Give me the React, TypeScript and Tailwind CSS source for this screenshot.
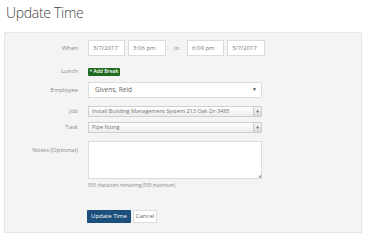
const labelCls = "w-[73px] shrink-0 text-right text-[6px] text-[#8a8a8a]";
const inputCls = "h-[16px] border border-[#dcdcdc] bg-white px-[4px] text-[6px] text-[#777] flex items-center";

function Select({ value, big }: { value: string; big?: boolean }) {
  if (big) {
    return (
      <div className="flex h-[16px] w-[174px] items-center justify-between border border-[#dcdcdc] bg-white pl-[6px] pr-[4px] text-[6.5px] text-[#666]">
        <span>{value}</span>
        <span className="text-[5px] text-[#555]">▼</span>
      </div>
    );
  }
  return (
    <div className="flex h-[11px] w-[174px] items-stretch border border-[#cfcfcf] bg-gradient-to-b from-white to-[#ececec] text-[5.5px] text-[#777]">
      <span className="flex flex-1 items-center pl-[3px]">{value}</span>
      <span className="flex w-[8px] items-center justify-center border-l border-[#cfcfcf] bg-gradient-to-b from-[#f4f4f4] to-[#d8d8d8] text-[4px] text-[#555]">▼</span>
    </div>
  );
}

export default function App() {
  return (
    <div className="h-[240px] w-[370px] bg-white font-['Open_Sans',sans-serif]">
      <h1 className="pl-[6px] pt-[2px] text-[14px] font-light leading-[22px] tracking-[-0.3px] text-[#444]">Update Time</h1>

      <div className="ml-[4px] mt-[8px] h-[201px] w-[358px] border border-[#e6e6e6] bg-[#f4f4f4]">
        {/* When */}
        <div className="mt-[7px] flex items-center gap-[10px]">
          <span className={labelCls}>When</span>
          <div className="flex items-center gap-[3px]">
            <div className={`${inputCls} w-[37px]`}>3/7/2017</div>
            <div className={`${inputCls} w-[38px]`}>3:06 pm</div>
            <span className="w-[15px] text-center text-[6px] text-[#8a8a8a]">to</span>
            <div className={`${inputCls} w-[37px]`}>6:09 pm</div>
            <div className={`${inputCls} w-[38px]`}>3/7/2017</div>
          </div>
        </div>

        {/* Lunch */}
        <div className="mt-[11px] flex items-center gap-[10px]">
          <span className={labelCls}>Lunch</span>
          <div className="flex h-[8px] w-[32px] items-center justify-center gap-[1px] rounded-[1px] bg-[#1f6b1f] text-[5px] font-semibold text-white">
            <span className="text-[5px] leading-none">+</span>Add Break
          </div>
        </div>

        {/* Employee */}
        <div className="mt-[6px] flex items-center gap-[10px]">
          <span className={labelCls}>Employee</span>
          <Select value="Givens, Reid" big />
        </div>

        {/* Job */}
        <div className="mt-[8px] flex items-center gap-[10px]">
          <span className={labelCls}>Job</span>
          <Select value="Install Building Management System 213 Oak Dr-3485" />
        </div>

        {/* Task */}
        <div className="mt-[5px] flex items-center gap-[10px]">
          <span className={labelCls}>Task</span>
          <Select value="Pipe fitting" />
        </div>

        {/* Notes */}
        <div className="mt-[8px] flex items-start gap-[10px]">
          <span className={`${labelCls} pt-[5px]`}>Notes (Optional)</span>
          <div>
            <div className="relative h-[38px] w-[174px] border border-[#dcdcdc] bg-white">
              <span className="absolute bottom-0 right-0 text-[4px] leading-none text-[#999]">◢</span>
            </div>
            <p className="mt-[3px] text-[4.5px] text-[#888]">500 characters remaining (500 maximum)</p>
          </div>
        </div>

        {/* Buttons */}
        <div className="mt-[21px] flex items-center gap-[2px] pl-[82px]">
          <div className="flex h-[13px] w-[44px] items-center justify-center rounded-[1px] bg-[#1d4f7c] text-[6px] text-white">Update Time</div>
          <div className="flex h-[13px] w-[24px] items-center justify-center rounded-[1px] border border-[#dcdcdc] bg-white text-[6px] text-[#666]">Cancel</div>
        </div>
      </div>
    </div>
  );
}
